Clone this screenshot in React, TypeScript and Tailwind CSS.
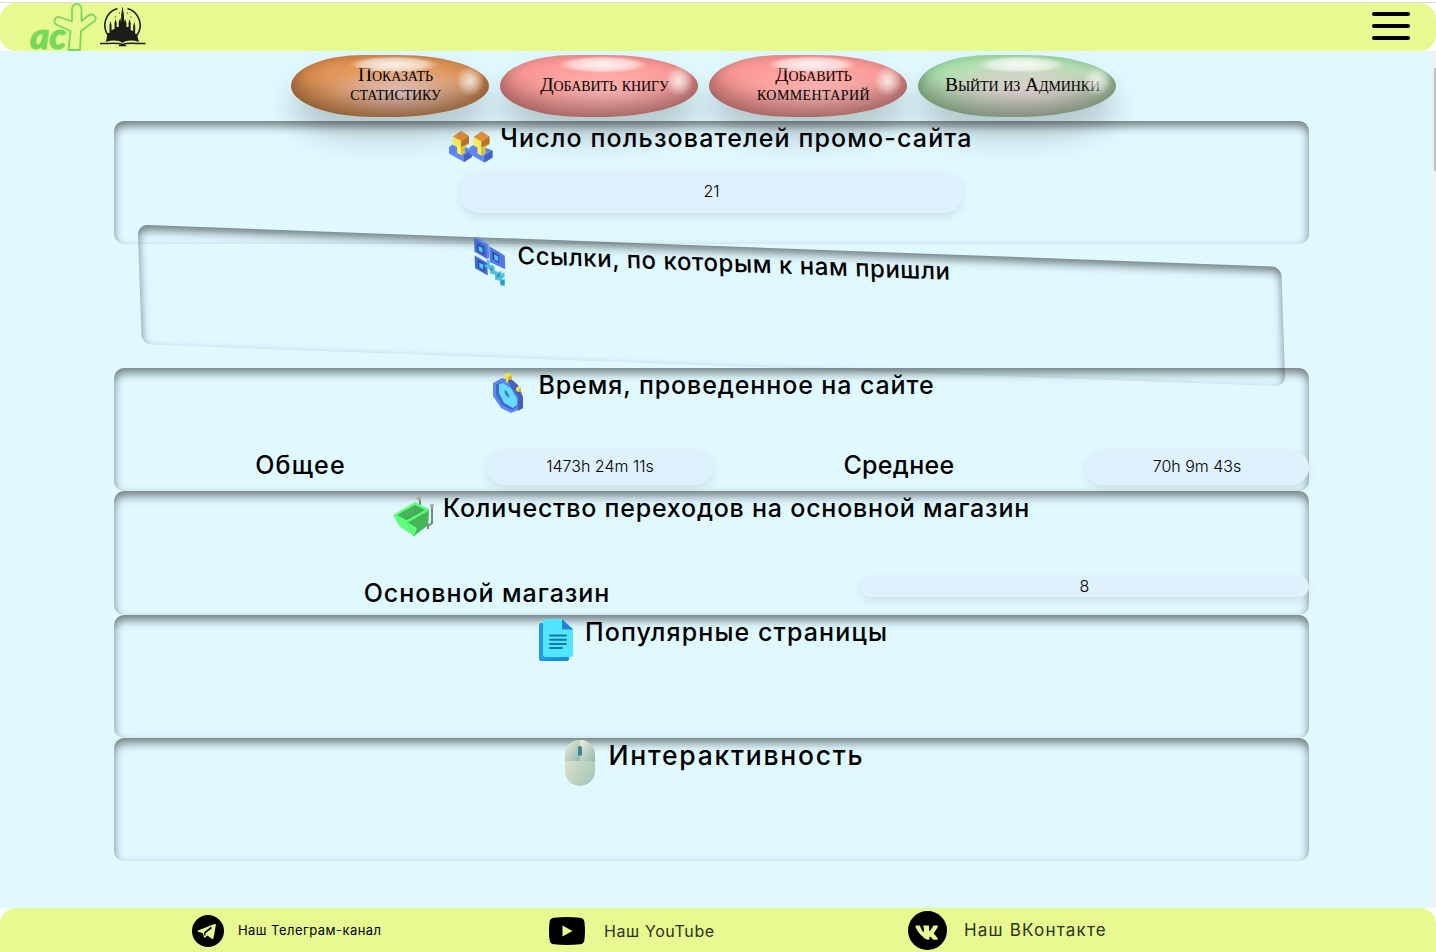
import type { ReactNode } from 'react';

const CARD =
  'h-[123.4px] w-full shrink-0 rounded-[10px] shadow-[inset_0_5px_10px_rgba(0,0,0,0.5)]';
const PILL =
  'flex items-center justify-center bg-[#def1fd] pb-[2px] font-light text-[16px] text-black shadow-[0_4px_8px_rgba(0,0,0,0.09)]';

function Heading({ icon, children, className }: { icon: ReactNode; children: ReactNode; className: string }) {
  return (
    <div className="flex h-[50px] items-start justify-center gap-[4px] pr-[4px]">
      <svg viewBox="0 0 50 50" className="h-[50px] w-[50px] shrink-0">
        {icon}
      </svg>
      <h2 className={`whitespace-nowrap font-medium leading-[34px] ${className}`}>{children}</h2>
    </div>
  );
}

function Person() {
  return (
    <>
      <path d="M3 26l6-4 17 7v7l-8 5L3 32.500z" fill="#5f87fb" />
      <path d="M18 34l8-5v7l-8 5z" fill="#4462b8" />
      <path d="M7 16l8 4v14l-4-2v-6l-4-2z" fill="#fdf05a" />
      <path d="M15 20l8-5v8l-4 3v6l-4 3z" fill="#d9c43c" />
      <path d="M7 15.500l8-5.800 8 5.300-8 5z" fill="#e3913b" />
      <path d="M15 20l8-5v7l-8 4z" fill="#bd722c" />
    </>
  );
}

const usersIcon = (
  <>
    <Person />
    <g transform="translate(20.500 .5)">
      <Person />
    </g>
  </>
);

const qrIcon = (
  <>
    <path d="M9.500 1l13 7v14l-13-7z M9.500 19l13 7v13l-13-7z" fill="#4468d8" />
    <path d="M25 9l11 6 5 3v14l-16-7z" fill="#5478ea" />
    <path d="M9.500 1l3-1 12 7v14l-2 1V8z" fill="#5b82f2" />
    <path d="M12.500 6l7 4v8l-7-4z M12.500 23l7 4v8l-7-4z M28 14l7 4v8l-7-4z" fill="#2c4b9c" />
    <path d="M14 9l4 2v5l-4-2z M14 26l4 2v5l-4-2z M30 17l4 2v5l-4-2z" fill="#50c8e8" />
    <path d="M22 22l3 2v4h3l2 2v4l4 1 3-1v3l3-2v5l-3 2 3 2v6l-5-2v-4l-5-1v-5l-5-1v-4l-7-4 4-1z" fill="#50bfe0" />
    <path d="M25 30l3 2v3l-3-2z M32 38l3-2v4l-3 1z M36 44l4-2v5l-4 2z" fill="#359ab8" />
  </>
);

const clockIcon = (
  <>
    <path d="M9 15l9-5 8 2 9 11 4 8v9l-12 5-10-5-8-12z" fill="#5f87fb" />
    <path d="M26 10l8 7 5 12v11l-5 3V29L24 14z" fill="#4462b8" />
    <path d="M12 17l5-3 10 5 6 12v8l-5 3-10-5-6-10z" fill="#3f68c8" />
    <path d="M15 16l4-1 8 5 6 11v6l-4 3-9-5-5-10z" fill="#67dcff" />
    <path d="M20.500 22l2 1 3 5-1 2-3.500-4z" fill="#3f78d0" />
    <path d="M20 7l4-2 4 2v3l-2 2h-2v3l-2-1v-3l-2-1z M32 20l2-1.500 3 1.500v3l-3 1-2-1.500z" fill="#efe04c" />
    <path d="M24 9l4-2v3l-2 2h-2z M34.500 22l2.500-2v3l-2.500 1z" fill="#cdbb32" />
  </>
);

const cartIcon = (
  <>
    <path d="M31 14V8l-3-1M43 15v17l-4 3M25 45v-4M13 37v-3M39 38v-5" fill="none" stroke="#7d8583" strokeWidth="2" />
    <circle cx="30" cy="7.500" r="2" fill="#a5adab" />
    <circle cx="43" cy="14.500" r="2" fill="#a5adab" />
    <path d="M4 24l22-13 14 7-1 16-14 11-14-9z" fill="#5fff7e" />
    <path d="M8 24l18-10v9l-9 6z" fill="#46b35a" />
    <path d="M26 14l10 5-18 10-2-1 10-6z" fill="#3fae54" />
    <path d="M18 31l22-12-1 15-14 11z" fill="#46b557" />
    <path d="M18 31l7 14 3-8z" fill="#5cff7a" />
    <path d="M18 31L40 18.500" stroke="#63f47e" strokeWidth="1.500" />
  </>
);

const docsIcon = (
  <>
    <path d="M10 8h24v38H10a2 2 0 0 1-2-2V10a2 2 0 0 1 2-2z" fill="#1f9be6" />
    <path d="M38 40v4a2 2 0 0 1-2 2H12z" fill="#1b8bd8" />
    <path d="M14 4h17l11 10v26a2 2 0 0 1-2 2H14a2 2 0 0 1-2-2V6a2 2 0 0 1 2-2z" fill="#52e5ff" />
    <path d="M31 4l11 10.500H32.500a1.500 1.500 0 0 1-1.500-1.500z" fill="#2780d8" />
    <path d="M19 20.500h16M19 24.700h16M19 28.900h16M19 33.100h12" stroke="#127c9c" strokeWidth="2" strokeLinecap="round" />
  </>
);

const mouseIcon = (
  <>
    <defs>
      <linearGradient id="mouseBody" x1="0" y1="0" x2="1" y2="1">
        <stop offset="0" stopColor="#f0ead6" />
        <stop offset="1" stopColor="#9cc3b4" />
      </linearGradient>
      <linearGradient id="mouseButton" x1="0" y1="0" x2="1" y2="1">
        <stop offset="0" stopColor="#f1ecd9" />
        <stop offset="1" stopColor="#8fb9ae" />
      </linearGradient>
    </defs>
    <rect x="10" y="2" width="30" height="46" rx="15" fill="url(#mouseBody)" />
    <path d="M25 2a15 15 0 0 0-15 15v6h15z" fill="url(#mouseButton)" />
    <path d="M25 2a15 15 0 0 1 15 15v6H25z" fill="url(#mouseButton)" />
    <rect x="23" y="8" width="4" height="10" rx="2" fill="#3f8291" />
  </>
);

function GlossButton({ children, className }: { children: ReactNode; className: string }) {
  return (
    <button
      className={`relative flex h-[62px] w-[198px] items-center justify-center rounded-[37%_46%_50%_42%/50%_50%_50%_50%] pb-[4px] pl-[11px] text-center font-['Liberation_Serif',serif] text-[19.5px] leading-[19px] tracking-[-0.1px] text-black [font-variant:small-caps] shadow-[0_20px_30px_rgba(0,0,0,0.2),inset_0_-14px_22px_rgba(0,0,0,0.34),inset_0_2px_8px_rgba(0,0,0,0.1)] ${className}`}
    >
      <span>{children}</span>
      <span className="absolute left-[58px] top-[1px] h-[17px] w-[90px] rounded-[50%] bg-[radial-gradient(closest-side,rgba(255,255,255,0.8)_20%,rgba(255,255,255,0.55)_70%,rgba(255,255,255,0))]" />
      <span className="absolute left-[165px] top-[11px] h-[30px] w-[28px] rounded-[50%] bg-[radial-gradient(closest-side,rgba(255,255,255,0.75),rgba(255,255,255,0.4)_55%,rgba(255,255,255,0))]" />
    </button>
  );
}

const RED = 'bg-[radial-gradient(ellipse_at_55%_60%,#ffb8b5,#fd9a97_60%)]';

function Header() {
  return (
    <header className="flex h-[51px] shrink-0 flex-col bg-white">
      <div className="mt-[2px] h-px bg-[#dcdcdc]" />
      <div className="flex h-[48px] items-start justify-between rounded-[16px] bg-[#e7fa91] pl-[28px] pr-[26px]">
        <div className="flex">
          <svg viewBox="28 3 70 48" className="h-[48px] w-[70px] overflow-visible">
            <text
              x="30"
              y="48.500"
              fontFamily="Lato, sans-serif"
              fontSize="36"
              fontWeight="900"
              fontStyle="italic"
              fill="#77d85a"
              stroke="#77d85a"
              strokeWidth="1"
              textLength="36"
              lengthAdjust="spacingAndGlyphs"
            >
              ac
            </text>
            <path
              d="M72 21V9c0-6.500 9.500-6.500 9.500 0v12l7-5.500c5-3 9.500 2.500 5.500 6L81 31l-1 19H68.500L70.500 31l-13.500-6c-5-2.500-2-10 4-7.500l11 4z"
              fill="none"
              stroke="#77d85a"
              strokeWidth="1.800"
              strokeLinejoin="round"
            />
          </svg>
          <svg viewBox="0 0 48 42" className="ml-[1px] mt-[2px] h-[42px] w-[48px]">
            <path d="M9.500 31a17.500 17.500 0 0 1 9-27.500M37.500 31a17.500 17.500 0 0 0-9-27.500" fill="none" stroke="#1c1d18" strokeWidth="1.600" />
            <path
              d="M7 37l1.500-9h2v-8l1-4 1 4v5l3-1v-6l1-4 1.200 4v4h2v-5l1.500-4 1 4v-7L23.600 1l1.400 10v6l1-3 1.500 4v4h2v-4l1-4 1.200 4v7l2.500 1v-5l1-4 1 4v8h1.500L40 37c-6-2-12-2-16.500 1C19 35 13 35 7 37z"
              fill="#1c1d18"
            />
            <path d="M1 38.500c8 .5 16-1.500 22.500 1 6.500-2.500 14.500-.5 23-1" fill="none" stroke="#1c1d18" strokeWidth="1.500" />
            <path d="M20 40.500h7" stroke="#1c1d18" strokeWidth="1.500" />
            <path d="M16 12h1M20 8h1M28 8h1M31.500 12h1" stroke="#1c1d18" />
          </svg>
        </div>
        <button aria-label="Menu" className="mt-[9px] flex w-[38px] flex-col gap-[8px]">
          <span className="h-[4px] rounded-full bg-black" />
          <span className="h-[4px] rounded-full bg-black" />
          <span className="h-[4px] rounded-full bg-black" />
        </button>
      </div>
    </header>
  );
}

function Footer() {
  return (
    <footer className="h-[44px] shrink-0 bg-white">
      <div className="flex h-[60px] items-start rounded-[16px] bg-[#e7fa91] text-[#2c3217]">
        <a className="ml-[192px] flex h-[45px] w-[357px] items-center gap-[14px]">
          <svg viewBox="0 0 32 32" className="h-[32px] w-[32px]">
            <circle cx="16" cy="16" r="16" fill="#000" />
            <path d="M6 15.500L22.500 9c.8-.2 1.500.2 1.300 1.200L21.500 23c-.3 1-1 1.200-1.800.7l-4.200-3.200-2.400 2c-.6.500-1 .3-1.200-.5l-1.300-4-4.500-1.300c-.7-.2-.7-.9-.1-1.200z" fill="#e7fa91" />
            <path d="M12.500 20.500l.5-3 6.500-5" fill="none" stroke="#000" strokeWidth="1.600" />
          </svg>
          <span className="whitespace-nowrap text-[13px] tracking-[0.45px] text-black">Наш Телеграм-канал</span>
        </a>
        <a className="flex h-[45px] w-[359px] items-center gap-[19px]">
          <svg viewBox="0 0 36 28" className="h-[28px] w-[36px]">
            <path d="M5 .7Q18-.6 31 .7q4 .4 4.400 4.300 1.200 9 0 18-.4 3.900-4.400 4.300-13 1.300-26 0Q1 26.900.6 23-.6 14 .6 5 1 1.100 5 .7z" fill="#000" />
            <path d="M13.500 8.500v11l10-5.500z" fill="#e7fa91" />
          </svg>
          <span className="whitespace-nowrap text-[16px] tracking-[0.6px]">Наш YouTube</span>
        </a>
        <a className="flex h-[45px] items-center gap-[17px]">
          <svg viewBox="0 0 39 39" className="h-[39px] w-[39px]">
            <circle cx="19.500" cy="19.500" r="19.500" fill="#000" />
            <path
              d="M8 14.500h3.300c.5 0 .7.200.9.800 1 3 2.600 5.700 3.300 5.700.3 0 .4-.2.400-.9v-3.200c-.1-1.400-.9-1.500-.9-2 0-.3.200-.5.500-.5h5c.4 0 .6.200.6.700v4.200c0 .5.200.6.300.6.300 0 .5-.1 1-.6 1.500-1.700 2.600-4.200 2.600-4.200.1-.3.400-.6.900-.6h3.100c.8 0 1 .4.800 1-.4 1.700-3.700 6.300-3.700 6.300-.3.500-.4.700 0 1.200.3.400 3.200 3.200 3.700 4.800.2.600-.1.900-.8.900h-3.200c-.7 0-.9-.5-2.100-1.700-1.100-1-1.500-1.200-1.800-1.200-.4 0-.5.100-.5.700v1.500c0 .4-.1.700-1.200.7-2 0-4.200-1.200-5.700-3.400C10.200 21.700 7.500 16.500 7.500 15.200c0-.4.100-.7.500-.7z"
              fill="#e7fa91"
            />
          </svg>
          <span className="whitespace-nowrap text-[17px] tracking-[1.2px]">Наш ВКонтакте</span>
        </a>
      </div>
    </footer>
  );
}

export default function App() {
  return (
    <div className="flex h-[952px] w-[1436px] flex-col overflow-hidden bg-white font-['Inter','Noto_Sans',sans-serif] text-black">
      <Header />
      <div className="flex min-h-0 flex-1 bg-[#e0f9ff]">
        <main className="min-w-0 flex-1 overflow-hidden">
          <div className="flex gap-[11px] pl-[291px] pt-[4px]">
            <GlossButton className="bg-[radial-gradient(ellipse_at_55%_60%,#e0c3c3,#e2995f_50%,#d8813a)]">
              Показать
              <br />
              статистику
            </GlossButton>
            <GlossButton className={RED}>Добавить книгу</GlossButton>
            <GlossButton className={RED}>
              Добавить
              <br />
              <span className="tracking-[0.4px]">комментарий</span>
            </GlossButton>
            <GlossButton className="bg-[radial-gradient(ellipse_at_55%_60%,#e2d2d2,#c9d6c0_40%,#a8e6ab_75%)]">
              <span className="whitespace-nowrap">Выйти из Админки</span>
            </GlossButton>
          </div>

          <div className="ml-[114px] mt-[4px] flex w-[1195px] flex-col">
            <section className={CARD}>
              <Heading icon={usersIcon} className="text-[25px] tracking-[1.13px]">
                Число пользователей промо-сайта
              </Heading>
              <div className={`mx-auto h-[42px] w-[503px] rounded-[20px] ${PILL}`}>21</div>
            </section>

            <section className={`${CARD} [transform:matrix(0.957,0.0352,0.033,0.972,0,0)]`}>
              <Heading icon={qrIcon} className="text-[25px] tracking-[0.6px]">
                Ссылки, по которым к нам пришли
              </Heading>
            </section>

            <section className={CARD}>
              <Heading icon={clockIcon} className="text-[25px] tracking-[0.9px]">
                Время, проведенное на сайте
              </Heading>
              <div className="mt-[32px] flex h-[35px] items-center">
                <h3 className="w-[373px] pb-[4px] text-center text-[25px] font-medium tracking-[1.2px]">Общее</h3>
                <div className={`h-[35px] w-[226px] rounded-[18px] ${PILL}`}>1473h 24m 11s</div>
                <h3 className="w-[372px] pb-[4px] text-center text-[25px] font-medium tracking-[0.3px]">Среднее</h3>
                <div className={`h-[35px] w-[224px] rounded-[18px] ${PILL}`}>70h 9m 43s</div>
              </div>
            </section>

            <section className={CARD}>
              <Heading icon={cartIcon} className="text-[25px] tracking-[0.78px]">
                Количество переходов на основной магазин
              </Heading>
              <div className="mt-[35px] flex items-start">
                <h3 className="w-[746px] text-center text-[25px] font-medium leading-[34px] tracking-[0.95px]">
                  Основной магазин
                </h3>
                <div className={`h-[21px] w-[449px] rounded-[10px] ${PILL}`}>8</div>
              </div>
            </section>

            <section className={CARD}>
              <Heading icon={docsIcon} className="text-[25px] tracking-[1.1px]">
                Популярные страницы
              </Heading>
            </section>

            <section className={CARD}>
              <Heading icon={mouseIcon} className="text-[26.5px] tracking-[1.75px]">
                Интерактивность
              </Heading>
            </section>
          </div>
        </main>
        <div className="flex w-[4px] justify-end bg-[#f1f1f1] pt-[17px]">
          <div className="h-[103px] w-[2px] bg-[#c1c1c1]" />
        </div>
      </div>
      <Footer />
    </div>
  );
}
